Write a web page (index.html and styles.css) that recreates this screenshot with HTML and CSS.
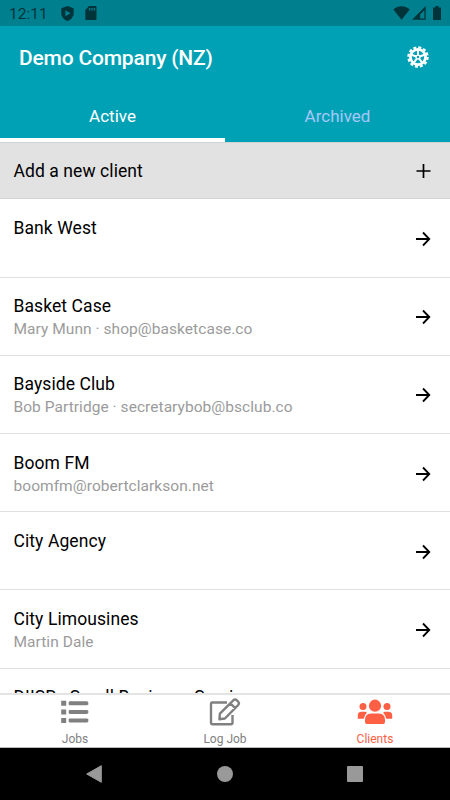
FILE: index.html
```
<!DOCTYPE html>
<html lang="en">

<head>
    <meta charset="UTF-8">
    <meta name="viewport" content="width=device-width, initial-scale=1">
    <title>Clients</title>
    <link rel="stylesheet" href="styles.css">
</head>

<body>
    <svg class="sprite" width="0" height="0">
        <symbol id="arrow" viewBox="0 0 16 16">
            <path d="M1 8H14M8 1.5L14.3 8L8 14.5" fill="none" stroke="currentColor" stroke-width="1.8" />
        </symbol>
    </svg>

    <div class="status-bar">
        <span class="clock">12:11</span>
        <svg class="shield" width="13" height="15" viewBox="0 0 13 15">
            <path fill="currentColor" fill-rule="evenodd" d="M6.5 0L12.7 2.2V7C12.7 10.8 10 13.7 6.5 15C3 13.7 .3 10.8 .3 7V2.2ZM4.3 4.2V10.2L9.6 7.2Z" />
        </svg>
        <svg width="12" height="14" viewBox="0 0 12 14">
            <path fill="currentColor" fill-rule="evenodd" d="M4 0H10.5Q11.5 0 11.5 1V13Q11.5 14 10.5 14H1.3Q.3 14 .3 13V4ZM4 2V4.6H5.3V2ZM6.3 2V4.6H7.6V2ZM8.6 2V4.6H9.9V2Z" />
        </svg>
        <div class="status-right">
            <svg width="17" height="14" viewBox="0 0 17 14">
                <path fill="currentColor" d="M8.5 13.7L.3 3.5C5-.8 12-.8 16.7 3.5Z" />
            </svg>
            <svg width="14" height="14" viewBox="0 0 14 14">
                <path fill="currentColor" fill-rule="evenodd" d="M13.7 0V13.7H0ZM12.4 4.2L8.2 8.4V12.4H12.4Z" />
            </svg>
            <svg class="battery" width="8" height="14" viewBox="0 0 8 14">
                <path fill="currentColor" d="M2.4 0H5.6V1.4H8V14H0V1.4H2.4Z" />
            </svg>
        </div>
    </div>

    <header class="header">
        <h1>Demo Company (NZ)</h1>
        <svg class="gear" width="22" height="22" viewBox="-11 -11 22 22">
            <circle r="9.6" fill="none" stroke="#fff" stroke-width="2.2" stroke-dasharray="3 2.026" />
            <circle r="7.6" fill="none" stroke="#fff" stroke-width="2.8" />
            <circle r="2.6" fill="#fff" />
            <path d="M0 0V-7M0 0L6.7-2.2M0 0L4.1 5.7M0 0L-4.1 5.7M0 0L-6.7-2.2" stroke="#fff" stroke-width="2" />
            <circle r="1.2" fill="#00a1b5" />
        </svg>
    </header>

    <nav class="tabs">
        <div class="tab active">Active</div>
        <div class="tab">Archived</div>
    </nav>

    <main class="list">
        <div class="add-row">
            <span>Add a new client</span>
            <svg width="16" height="16" viewBox="0 0 16 16">
                <path d="M8.5 1V15M1.5 8H15.5" stroke="currentColor" stroke-width="1.7" />
            </svg>
        </div>
        <div class="client">
            <div>
                <div class="name">Bank West</div>
            </div>
            <svg class="arrow"><use href="#arrow" /></svg>
        </div>
        <div class="client">
            <div>
                <div class="name">Basket Case</div>
                <div class="contact">Mary Munn · shop@basketcase.co</div>
            </div>
            <svg class="arrow"><use href="#arrow" /></svg>
        </div>
        <div class="client">
            <div>
                <div class="name">Bayside Club</div>
                <div class="contact">Bob Partridge · secretarybob@bsclub.co</div>
            </div>
            <svg class="arrow"><use href="#arrow" /></svg>
        </div>
        <div class="client">
            <div>
                <div class="name">Boom FM</div>
                <div class="contact">boomfm@robertclarkson.net</div>
            </div>
            <svg class="arrow"><use href="#arrow" /></svg>
        </div>
        <div class="client">
            <div>
                <div class="name">City Agency</div>
            </div>
            <svg class="arrow"><use href="#arrow" /></svg>
        </div>
        <div class="client">
            <div>
                <div class="name">City Limousines</div>
                <div class="contact">Martin Dale</div>
            </div>
            <svg class="arrow"><use href="#arrow" /></svg>
        </div>
        <div class="client">
            <div>
                <div class="name">DIISR - Small Business Services</div>
            </div>
            <svg class="arrow"><use href="#arrow" /></svg>
        </div>
    </main>

    <nav class="bottom-nav">
        <div class="nav-item">
            <svg width="36" height="28" viewBox="0 0 36 28">
                <path fill="currentColor" d="M4.2 2.8h5v5h-5zM4.2 11.4h5v5h-5zM4.2 20h5v5h-5z" />
                <path d="M12.2 5.3H30.5M12.2 13.9H30.5M12.2 22.5H30.5" stroke="currentColor" stroke-width="4" />
                <path d="M11.7 5.3H31.3M11.7 13.9H31.3M11.7 22.5H31.3" stroke="currentColor" stroke-width="2.8" />
            </svg>
            <span>Jobs</span>
        </div>
        <div class="nav-item">
            <svg width="36" height="28" viewBox="0 0 36 28">
                <g fill="none" stroke="currentColor" stroke-width="2.4" stroke-linejoin="round">
                    <path d="M20 4.5H5.2Q4 4.5 4 5.7V25Q4 26.2 5.2 26.2H24.3Q25.5 26.2 25.5 25V17" />
                    <path d="M12.4 21.3L12.9 15.7L26.3 2.3Q28 .7 29.9 2.4L31.2 3.7Q32.7 5.4 31.1 7.1L17.9 20.5ZM23.4 5.3L28.2 10.1" />
                </g>
            </svg>
            <span>Log Job</span>
        </div>
        <div class="nav-item active">
            <svg width="36" height="28" viewBox="0 0 36 28">
                <g fill="currentColor">
                    <circle cx="18" cy="7.7" r="6.1" />
                    <circle cx="6" cy="8.5" r="3.5" />
                    <circle cx="30" cy="8.5" r="3.5" />
                    <path d="M8 24V22Q8 15.5 14 15.5H22Q28 15.5 28 22V24Q28 26 26 26H10Q8 26 8 24Z" />
                    <path d="M.8 20.7V17.5Q.8 13.8 4.5 13.8H8.5L10 14.8Q7.3 17 6.7 20.7Z" />
                    <path d="M35.2 20.7V17.5Q35.2 13.8 31.5 13.8H27.5L26 14.8Q28.7 17 29.3 20.7Z" />
                </g>
            </svg>
            <span>Clients</span>
        </div>
    </nav>

    <div class="system-nav">
        <svg width="18" height="20" viewBox="0 0 18 20">
            <path fill="currentColor" d="M.7 10L15.3 1.7V18.3Z" stroke="currentColor" stroke-linejoin="round" />
        </svg>
        <svg width="18" height="18" viewBox="0 0 18 18">
            <circle cx="9" cy="9" r="8" fill="currentColor" />
        </svg>
        <svg width="18" height="18" viewBox="0 0 18 18">
            <rect x="1" y="1" width="16" height="16" rx="1" fill="currentColor" />
        </svg>
    </div>
</body>

</html>
```
FILE: styles.css
```
* {
    box-sizing: border-box;
}

body {
    margin: 0;
    height: 800px;
    display: flex;
    flex-direction: column;
    overflow: hidden;
    background-color: #fff;
    color: #000;
    font-family: Roboto, sans-serif;
}

svg {
    display: block;
    flex-shrink: 0;
}

.sprite {
    display: none;
}

.status-bar {
    height: 26px;
    padding: 0 9px;
    display: flex;
    align-items: center;
    background-color: #00808f;
    color: #00343b;
}

.clock {
    width: 52px;
    padding-top: 2px;
    font-size: 15.5px;
}

.shield {
    margin-right: 11px;
}

.status-right {
    margin-left: auto;
    display: flex;
    align-items: center;
    gap: 2px;
}

.battery {
    margin-left: 5px;
}

.header {
    height: 62px;
    padding: 2px 21px 0 19px;
    display: flex;
    align-items: center;
    justify-content: space-between;
    background-color: #00a1b5;
    color: #fff;
}

.header h1 {
    margin: 0;
    font-size: 21px;
    font-weight: 500;
    letter-spacing: -0.18px;
}

.gear {
    margin-top: -2px;
}

.tabs {
    height: 54px;
    display: flex;
    background-color: #00a1b5;
}

.tab {
    flex: 1;
    padding-top: 5px;
    display: flex;
    align-items: center;
    justify-content: center;
    border-bottom: 4px solid transparent;
    color: #a6c8f8;
    font-size: 17px;
}

.tab.active {
    border-bottom-color: #fff;
    color: #fff;
}

.list {
    height: 551px;
    overflow: hidden;
}

.add-row {
    height: 57.4px;
    padding: 0 19px 0 13.5px;
    display: flex;
    align-items: center;
    justify-content: space-between;
    background-color: #e2e2e2;
    border-top: 1px solid #cfd3d4;
    border-bottom: 1px solid #d5d5d5;
    font-size: 17.5px;
    letter-spacing: 0.08px;
}

.client {
    height: 78.2px;
    padding: 17.6px 19px 0 13.5px;
    display: flex;
    justify-content: space-between;
    border-bottom: 1px solid #e0e0e0;
}

.name {
    font-size: 17.5px;
    line-height: 22px;
    letter-spacing: 0.08px;
}

.contact {
    font-size: 15.5px;
    line-height: 24px;
    letter-spacing: 0.05px;
    color: #9b9b9b;
}

.arrow {
    width: 16px;
    height: 16px;
    margin-top: 14px;
}

.bottom-nav {
    height: 55px;
    display: flex;
    border-top: 2px solid #e4e4e4;
    border-bottom: 1px solid #bbb;
}

.nav-item {
    flex: 1;
    padding-top: 3px;
    display: flex;
    flex-direction: column;
    align-items: center;
    color: #808080;
    font-size: 12px;
    line-height: 15px;
}

.nav-item span {
    margin-top: 6px;
}

.nav-item.active {
    color: #ff5f45;
}

.system-nav {
    height: 52px;
    padding: 0 86px;
    display: flex;
    align-items: center;
    justify-content: space-between;
    background-color: #000;
    color: #999;
}
```
